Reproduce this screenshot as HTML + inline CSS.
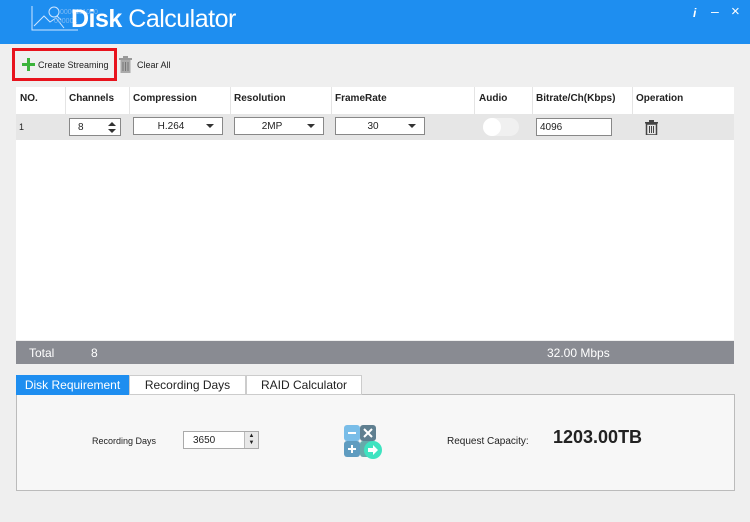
<!DOCTYPE html>
<html><head><style>
*{margin:0;padding:0;box-sizing:border-box}
body{width:750px;height:522px;background:#efefef;font-family:"Liberation Sans",sans-serif;position:relative;overflow:hidden;font-size:10px;color:#222}
.a{position:absolute}
.hdr{left:0;top:0;width:750px;height:44px;background:#1e8ef0}
.sel{background:#fff;border:1px solid #888;height:18px;font-size:10px;text-align:center;line-height:17px}
.tri{position:absolute;right:8px;top:6px;border-left:4px solid transparent;border-right:4px solid transparent;border-top:4px solid #333}
</style></head><body>
<div class="a hdr">
 <svg class="a" style="left:30px;top:4px" width="80" height="28" viewBox="0 0 80 28" fill="none" stroke="#cfe6ff" stroke-width="1"><path d="M2 2V26H48"/><path d="M4 22L14 12L20 18L26 14L34 24"/><circle cx="24" cy="8" r="5"/><path d="M27 12L31 16"/><text x="30" y="10" font-size="7" fill="#7fbaf5" stroke="none">0000111000</text><text x="24" y="19" font-size="7" fill="#7fbaf5" stroke="none">000001</text></svg>
 <div class="a" style="left:71px;top:5px;font-size:25px;color:#fff;letter-spacing:-0.5px"><b>Disk</b> <span style="font-weight:normal">Calculator</span></div>
 <div class="a" style="left:693px;top:6px;color:#fff;font-size:12px;font-style:italic;font-weight:bold">i</div>
 <div class="a" style="left:711px;top:3px;color:#fff;font-size:14px">–</div>
 <div class="a" style="left:731px;top:3px;color:#fff;font-size:15px">×</div>
</div>
<div class="a" style="left:12px;top:48px;width:105px;height:33px;border:3px solid #e8131d"></div>
<div class="a" style="left:22px;top:58px;width:13px;height:13px"><div class="a" style="left:5px;top:0;width:3px;height:13px;background:#3bb33b"></div><div class="a" style="left:0;top:5px;width:13px;height:3px;background:#3bb33b"></div></div>
<div class="a" style="left:38px;top:60px;font-size:9px">Create Streaming</div>
<svg class="a" style="left:119px;top:56px" width="13" height="17" viewBox="0 0 13 17"><rect x="0" y="2" width="13" height="2" fill="#999"/><rect x="4" y="0" width="5" height="2" fill="#999"/><rect x="1.5" y="4" width="10" height="13" fill="#aaa"/><path d="M4 6V15M6.5 6V15M9 6V15" stroke="#777"/></svg>
<div class="a" style="left:137px;top:60px;font-size:9px">Clear All</div>
<div class="a" style="left:16px;top:87px;width:718px;height:253px;background:#fff"></div>
<div class="a" style="left:16px;top:114px;width:718px;height:26px;background:#e6e6e6"></div>
<div class="a" style="left:16px;top:87px;width:718px;font-weight:bold;font-size:10px">
 <span class="a" style="left:4px;top:6px">NO.</span><span class="a" style="left:53px;top:6px">Channels</span><span class="a" style="left:117px;top:6px">Compression</span><span class="a" style="left:218px;top:6px">Resolution</span><span class="a" style="left:319px;top:6px">FrameRate</span><span class="a" style="left:463px;top:6px">Audio</span><span class="a" style="left:520px;top:6px">Bitrate/Ch(Kbps)</span><span class="a" style="left:620px;top:6px">Operation</span>
</div>
<div class="a" style="left:65px;top:87px;width:1px;height:27px;background:#e4e4e4"></div>
<div class="a" style="left:129px;top:87px;width:1px;height:27px;background:#e4e4e4"></div>
<div class="a" style="left:230px;top:87px;width:1px;height:27px;background:#e4e4e4"></div>
<div class="a" style="left:331px;top:87px;width:1px;height:27px;background:#e4e4e4"></div>
<div class="a" style="left:474px;top:87px;width:1px;height:27px;background:#e4e4e4"></div>
<div class="a" style="left:532px;top:87px;width:1px;height:27px;background:#e4e4e4"></div>
<div class="a" style="left:632px;top:87px;width:1px;height:27px;background:#e4e4e4"></div>
<div class="a" style="left:19px;top:122px;font-size:9px">1</div>
<div class="a sel" style="left:69px;top:118px;width:52px;text-align:left;padding-left:8px">8<svg class="a" style="right:4px;top:3px" width="8" height="11" viewBox="0 0 8 11"><path d="M0 4L4 0L8 4ZM0 7L4 11L8 7Z" fill="#333"/></svg></div>
<div class="a sel" style="left:133px;top:117px;width:90px;padding-right:14px">H.264<span class="tri"></span></div>
<div class="a sel" style="left:234px;top:117px;width:90px;padding-right:14px">2MP<span class="tri"></span></div>
<div class="a sel" style="left:335px;top:117px;width:90px;padding-right:14px">30<span class="tri"></span></div>
<div class="a" style="left:483px;top:118px;width:36px;height:18px;border-radius:9px;background:#f0f0f0"><div class="a" style="left:0;top:0;width:18px;height:18px;border-radius:9px;background:#fff"></div></div>
<div class="a sel" style="left:536px;top:118px;width:76px;text-align:left;padding-left:3px">4096</div>
<svg class="a" style="left:645px;top:120px" width="13" height="15" viewBox="0 0 13 15"><rect x="0" y="2" width="13" height="1.5" fill="#444"/><rect x="4" y="0" width="5" height="2" fill="#444"/><rect x="1.5" y="4" width="10" height="11" fill="none" stroke="#444" stroke-width="1.5"/><path d="M4.5 6V13M6.5 6V13M8.5 6V13" stroke="#444"/></svg>
<div class="a" style="left:16px;top:341px;width:718px;height:23px;background:#898b92;color:#fff;font-size:12px">
 <span class="a" style="left:13px;top:5px">Total</span><span class="a" style="left:75px;top:5px">8</span><span class="a" style="left:531px;top:5px">32.00 Mbps</span>
</div>
<div class="a" style="left:16px;top:394px;width:719px;height:97px;background:#f7f7f7;border:1px solid #bbb"></div>
<div class="a" style="left:16px;top:375px;width:113px;height:20px;background:#1e8ef0;color:#fff;font-size:12px;text-align:center;line-height:20px">Disk Requirement</div>
<div class="a" style="left:129px;top:375px;width:117px;height:20px;background:#fff;border:1px solid #ccc;font-size:12px;text-align:center;line-height:18px">Recording Days</div>
<div class="a" style="left:246px;top:375px;width:116px;height:20px;background:#fff;border:1px solid #ccc;font-size:12px;text-align:center;line-height:18px">RAID Calculator</div>
<div class="a" style="left:92px;top:436px;font-size:9px">Recording Days</div>
<div class="a sel" style="left:183px;top:431px;width:76px;text-align:left;padding-left:9px;border-color:#aaa">3650<span class="a" style="right:0;top:0;width:14px;height:16px;background:#e8e8e8;border-left:1px solid #bbb;font-size:6px;line-height:7px;text-align:center;padding-top:1px">▲<br>▼</span></div>
<svg class="a" style="left:344px;top:425px" width="40" height="34" viewBox="0 0 40 34"><rect x="0" y="0" width="16" height="16" rx="3" fill="#79bde8"/><rect x="16" y="0" width="16" height="16" rx="3" fill="#5f7f90"/><rect x="0" y="16" width="16" height="16" rx="3" fill="#5f9cc0"/><rect x="16" y="16" width="16" height="16" rx="3" fill="#6aa"/><path d="M4 8H12M20 4L28 12M28 4L20 12M8 20V28M4 24H12" stroke="#fff" stroke-width="2"/><circle cx="29" cy="25" r="9" fill="#3ee3c0"/><path d="M24 23H29V20L34 25L29 30V27H24Z" fill="#fff"/></svg>
<div class="a" style="left:447px;top:436px;font-size:10px">Request Capacity:</div>
<div class="a" style="left:553px;top:427px;font-size:18px;font-weight:bold">1203.00TB</div>
</body></html>
